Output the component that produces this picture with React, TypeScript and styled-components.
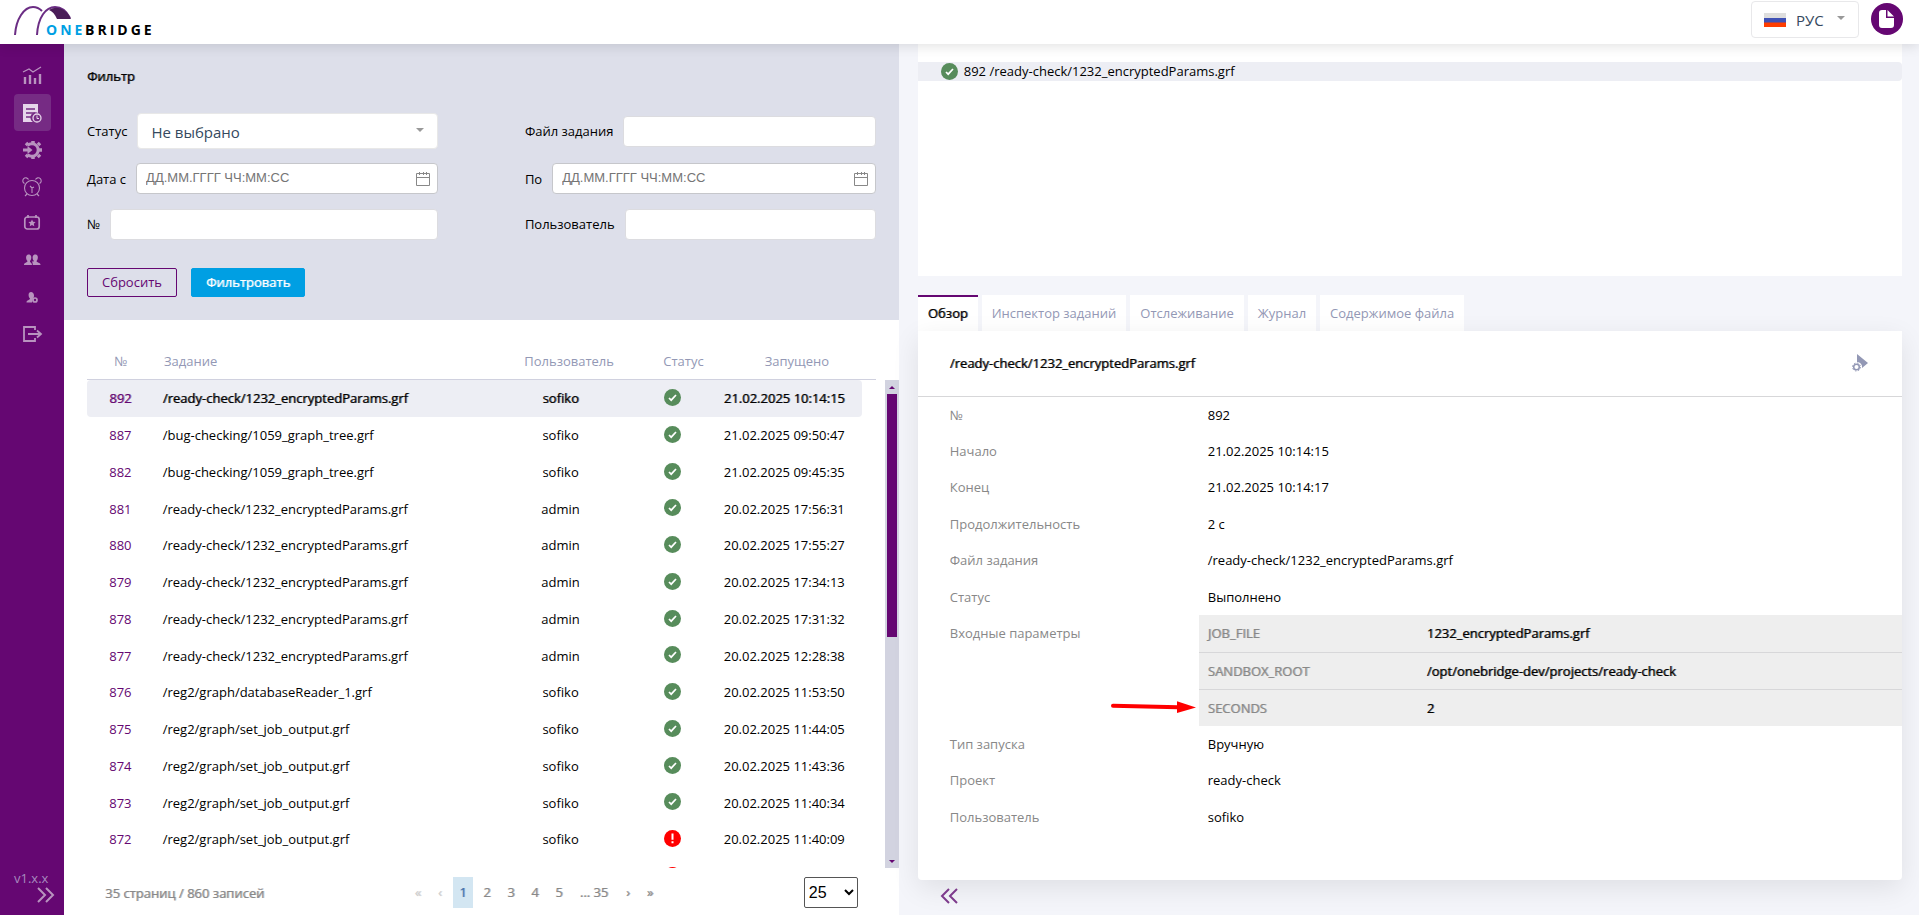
import React from 'react';
import styled, { createGlobalStyle, css } from 'styled-components';

const Global = createGlobalStyle`
  * { box-sizing: border-box; }
  html, body, #root { height: 100%; }
  body { margin: 0; font: 13px/20px "Open Sans", "Noto Sans", sans-serif; color: #000; background: #fff; }
  button, input, select { font: inherit; margin: 0; }
  button { cursor: pointer; }
`;

const strong = css`text-shadow: 1px 0 0 color-mix(in srgb, currentColor 60%, transparent);`;

const Page = styled.div`display: flex; flex-direction: column; height: 100vh; overflow: hidden;`;
const Header = styled.header`
  position: relative; z-index: 2; flex: none; height: 44px; padding: 0 16px 0 14px;
  display: flex; align-items: flex-start; justify-content: space-between;
  background: #fff; box-shadow: 0 2px 12px rgba(0, 0, 0, 0.12);
`;
const LogoArt = styled.svg`display: block; margin-top: 4px; width: 150px; height: 34px; overflow: visible;`;
const HeaderTools = styled.div`display: flex; gap: 12px; padding-top: 1px;`;
const Language = styled.button`
  width: 108px; height: 37px; padding: 0 13px 0 12px; display: flex; align-items: center;
  border: 1px solid #e8e8ea; border-radius: 4px; background: #fff; color: #35495e; font-size: 15px;
`;
const Flag = styled.svg`width: 22px; height: 14px; margin-right: 10px;`;
const Caret = styled.span`
  margin: 0 0 4px auto; border: 4px solid transparent; border-top-color: #999; border-bottom: 0;
`;
const DocButton = styled.button`
  width: 32px; height: 32px; margin-top: 2px; padding: 0; border: 0; border-radius: 50%; background: #650772;
  display: grid; place-items: center;
`;

const Body = styled.div`flex: 1; min-height: 0; display: flex;`;
const Sidebar = styled.nav`
  flex: none; width: 64px; padding: 14px 0 12px; background: #650772;
  display: flex; flex-direction: column; align-items: center;
`;
const NavLink = styled.a<{ $active?: boolean }>`
  flex: none; width: 37px; height: 37px; display: grid; place-items: center; border-radius: 4px; color: #b893bf;
  &:nth-child(4n + 1) { height: 36px; }
  ${p => p.$active && 'background: #762b84; color: #e6d5ea;'}
  svg { display: block; width: 20px; height: 20px; overflow: visible; }
`;
const Version = styled.div`margin-top: auto; width: 100%; padding-left: 14px; color: #a78abf; line-height: 17px;`;
const Expand = styled.button`
  align-self: flex-end; margin-right: 9px; padding: 0; border: 0; background: none; color: #b893bf; line-height: 0;
`;
const Panels = styled.div`flex: 1; min-width: 0; display: flex;`;

const Left = styled.main`flex: 0 0 45%; min-width: 0; display: flex; flex-direction: column; background: #fff;`;
const Filter = styled.form`flex: none; height: 276px; padding: 22px 23px 0; background: #dddfea;`;
const FilterTitle = styled.h2`margin: 0 0 25px; font-size: 13px; line-height: 20px; font-weight: 400; ${strong}`;
const Fields = styled.div`display: grid; grid-template-columns: 1fr 1fr; column-gap: 87px;`;
const Field = styled.div<{ $h: number }>`height: ${p => p.$h}px; display: flex; align-items: center; gap: 10px;`;
const Input = styled.input`
  flex: 1; min-width: 0; height: 31px; border: 1px solid #dcdce0; border-radius: 4px; background: #fff;
`;
const SelectWrap = styled.div`flex: 1; display: flex; align-items: center; position: relative;`;
const StatusSelect = styled.select`
  width: 100%; height: 36px; padding: 2px 13px 0; border: 1px solid #e8e8e8; border-radius: 4px;
  background: #fff; appearance: none; color: #35495e; font-size: 15px;
`;
const SelectCaret = styled(Caret)`position: absolute; right: 14px; top: 15px; margin: 0; pointer-events: none;`;
const DateBox = styled.div`
  flex: 1; height: 31px; display: flex; align-items: center; padding: 0 7px 0 9px;
  border: 1px solid #c6c7cb; border-radius: 4px; background: #fff; color: #888;
  input {
    flex: 1; min-width: 0; padding: 0 0 1px; border: 0; outline: 0; background: none;
    font: 13px/20px "Liberation Sans", sans-serif;
  }
  input::placeholder { color: #757575; }
`;
const Actions = styled.div`display: flex; gap: 14px; margin-top: 26px;`;
const Button = styled.button<{ $primary?: boolean }>`
  height: 29px; padding: 0 14px 2px; border-radius: 2px; border: 1px solid #650772; background: transparent; color: #650772;
  ${p => p.$primary && css`background: #009fe3; border-color: #009fe3; color: #fff; ${strong}`}
`;

const ListArea = styled.section`flex: 1; min-height: 0; padding: 22px 0 0 23px; display: flex; flex-direction: column;`;
const Scroll = styled.div`flex: 1; min-height: 0; display: flex; overflow: hidden;`;
const TableClip = styled.div`flex: 1; min-width: 0; overflow: hidden;`;
const Table = styled.table`
  width: 100%; table-layout: fixed; border-collapse: separate; border-spacing: 0;
  th { height: 37px; padding: 1px 0 0; color: #9398b5; font-weight: 400; line-height: 20px; vertical-align: middle; }
  th:nth-child(2), td:nth-child(2) { text-align: left; padding-left: 6px; }
  th:nth-child(3), td:nth-child(3), th:nth-child(4), td:nth-child(4) { padding-left: 2px; }
  th:first-child, td:first-child { padding-right: 3px; }
`;
const HeadWrap = styled.div`flex: none; margin-right: 23px; border-bottom: 1px solid #d0d1df;`;
const Row = styled.tr<{ $selected?: boolean }>`
  td { height: 37px; padding: 0 0 1px; text-align: center; line-height: 20px; vertical-align: middle; white-space: nowrap; }
  &:nth-child(4n) td { height: 36px; }
  td:first-child { color: #650772; border-radius: 4px 0 0 4px; }
  td:last-child { border-radius: 0 4px 4px 0; }
  ${p => p.$selected && css`td { background: #edeef4; ${strong} }`}
`;
const StatusSvg = styled.svg`display: block; margin: 0 auto 2px; width: 17px; height: 17px; flex: none;`;
const Scrollbar = styled.div`
  flex: none; width: 14px; margin-left: 23px; background: #d2d3e0;
  display: flex; flex-direction: column; align-items: center; padding: 6px 0 5px;
`;
const Tip = styled.span<{ $down?: boolean }>`
  flex: none; border: 3px solid transparent;
  ${p => (p.$down ? 'border-top-color: #650772; border-bottom: 0; margin-top: auto;' : 'border-bottom-color: #650772; border-top: 0;')}
`;
const Thumb = styled.span`flex: none; width: 10px; height: 51%; margin-top: 5px; background: #650772;`;

const Footer = styled.footer`
  flex: none; height: 47px; padding: 2px 41px 0 18px; display: flex; justify-content: space-between;
  align-items: center; color: #888;
`;
const Summary = styled.span`${strong}`;
const Pager = styled.div`display: flex; align-items: center;`;
const PageButton = styled.button<{ $w?: number; $current?: boolean; $off?: boolean }>`
  width: ${p => p.$w || 24}px; height: 31px; padding: 0 0 1px; border: 0; background: none; color: ${p => (p.$off ? '#ccc' : '#888')};
  ${strong}
  ${p => p.$current && 'width: 20px; margin: 0 2px; background: #d3e6f2; color: #3f6ea8;'}
`;
const PageSize = styled.select`
  width: 54px; height: 31px; padding: 0; border: 1px solid #555; border-radius: 2px;
  background: #fff; color: #000; font: 16px/20px "Liberation Sans", sans-serif;
`;

const Right = styled.aside`
  flex: 1; min-width: 0; padding: 0 17px 0 19px; background: #f4f5fa;
  display: flex; flex-direction: column;
`;
const Tree = styled.section`flex: none; height: 232px; padding-top: 18px; background: #fff;`;
const TreeItem = styled.div`
  height: 19px; padding: 0 0 1px 23px; display: flex; align-items: center; background: #edeef4; border-radius: 0 4px 4px 0;
  ${StatusSvg} { margin: 0 6px 0 0; }
`;
const Tabs = styled.div`display: flex; gap: 4px; margin-top: 19px; height: 36px;`;
const Tab = styled.button<{ $active?: boolean }>`
  padding: 0 10px 3px; border: 0; border-top: 2px solid ${p => (p.$active ? '#650772' : '#fff')}; white-space: nowrap;
  background: #fff; color: ${p => (p.$active ? '#000' : '#9398b5')};
  ${p => p.$active && strong}
`;
const Card = styled.section`
  flex: 1; min-height: 0; background: #fff; border-radius: 0 0 4px 4px; box-shadow: 0 8px 28px rgba(0, 0, 0, 0.09);
`;
const CardHead = styled.div`
  height: 66px; padding: 0 34px 1px 32px; display: flex; align-items: center; justify-content: space-between;
  border-bottom: 1px solid #d7d7d9;
  h2 { margin: 0; font-size: 13px; line-height: 20px; font-weight: 400; ${strong} }
`;
const IconButton = styled.button`padding: 0; border: 0; background: none; color: #9398b5; line-height: 0;`;
const Details = styled.dl`margin: 0;`;
const Detail = styled.div`
  display: flex; min-height: 36px; padding-left: 32px;
  &:nth-child(2n + 3) { min-height: 37px; }
  dt { flex: none; width: 249px; padding-top: 8px; color: #888; }
  dd { flex: 1; margin: 0; padding: 8px 0 0 9px; }
`;
const ParamsCell = styled.dd`&&& { position: relative; padding: 0; }`;
const Params = styled.table`
  width: 100%; border-collapse: collapse; background: #eee; ${strong}
  th, td { height: 37px; padding: 0 9px; text-align: left; font-weight: 400; ${strong} }
  th { width: 219px; color: #888; }
  tr + tr { border-top: 1px solid #d7d7d9; }
`;
const Arrow = styled.svg`position: absolute; right: 100%; top: 84px; width: 90px; height: 16px;`;
const Collapse = styled.button`
  flex: none; align-self: flex-start; height: 35px; margin-left: 22px; padding: 0 0 4px; border: 0; background: none; color: #7d3a8c; line-height: 0;
`;

function Chevrons({ left }: { left?: boolean }) {
  return (
    <svg width="19" height="16" viewBox="0 0 19 16" fill="none" stroke="currentColor" strokeWidth="2">
      {left
        ? <path d="M9 1 2 8l7 7M17 1l-7 7 7 7" />
        : <path d="m2 1 7 7-7 7M10 1l7 7-7 7" />}
    </svg>
  );
}

function Status({ ok }: { ok: boolean }) {
  return (
    <StatusSvg viewBox="0 0 17 17" role="img" aria-label={ok ? 'Выполнено' : 'Ошибка'}>
      <circle cx="8.5" cy="8.5" r="8.5" fill={ok ? '#578c5b' : '#ff0000'} />
      {ok
        ? <path d="m5 9 2.2 2.2L12 6" fill="none" stroke="#fff" strokeWidth="1.7" />
        : <path d="M8.5 3.5v6.3M8.5 11.3v2" fill="none" stroke="#fff" strokeWidth="2" />}
    </StatusSvg>
  );
}

function Calendar() {
  return (
    <svg width="14" height="14" viewBox="0 0 14 14" fill="none" stroke="#888">
      <path d="M.5 1.5h13v12H.5zM.5 5.5h13M3.5 0v3M10.5 0v3M7.5 0v3" />
    </svg>
  );
}

function Logo() {
  return (
    <LogoArt viewBox="0 0 150 34" role="img" aria-label="ONEBRIDGE">
      <g fill="none" stroke="#6b2d84" strokeWidth="2">
        <path d="M1 31C2 15 10 3 19 3c4 0 7 2 9 4" />
        <path d="M23 31C24 13 32 3 41 3c7 0 12 5 15 11" />
      </g>
      <path d="M35 6c8-5 18-1 22 9H43c-2-5-5-8-8-9z" fill="#4a1d58" />
      <text y="31" fontFamily='"Open Sans", sans-serif' fontWeight="700" fontSize="14" letterSpacing="3">
        <tspan x="32" fill="#009fe3">ONE</tspan>
        <tspan x="71" fill="#000">BRIDGE</tspan>
      </text>
    </LogoArt>
  );
}

const navIcons: { name: string; art: React.ReactNode }[] = [
  { name: 'Мониторинг', art: <g fill="none" stroke="currentColor"><path d="M1 6l6-3 4 3 8-5" strokeWidth="1.3" /><path d="M3 18v-7M8 18V9M13 18v-6M18 18V8" strokeWidth="2.4" /></g> },
  { name: 'История', art: <g><path d="M1 1h15v9a5 5 0 0 0-5 9H1z" fill="currentColor" /><path d="M4 6h9M4 10h9M4 14h6" stroke="#762b84" strokeWidth="1.3" /><circle cx="15" cy="15" r="4" fill="#762b84" stroke="currentColor" strokeWidth="1.3" /><path d="M15 12.500v3h2" fill="none" stroke="currentColor" /></g> },
  { name: 'Запуск', art: <g fill="none" stroke="currentColor"><path d="M5.500 5.500a6.300 6.300 0 1 1 0 9" strokeWidth="3" /><path d="M11 1v3M11 16v3M4 3l2 2M18 3l-2 2M4 17l2-2M18 17l-2-2M17 10h3" strokeWidth="3.500" /><path d="M1 10h5" strokeWidth="3" /><path d="M5.500 6l5 4-5 4z" fill="currentColor" stroke="none" /></g> },
  { name: 'Расписание', art: <g fill="none" stroke="currentColor" strokeWidth="1.1"><circle cx="10" cy="11" r="7.500" /><path d="M2.500 6.500a3 3 0 1 1 4-4M17.500 6.500a3 3 0 1 0-4-4M5 17l-2 2M15 17l2 2M8 9l2 2 2-1M10 11v5" /></g> },
  { name: 'События', art: <g><rect x="2.800" y="4" width="14.400" height="12" rx="2.500" fill="none" stroke="currentColor" strokeWidth="1.700" /><path d="M6 2v3M14 2v3" stroke="currentColor" strokeWidth="1.700" /><path d="m10 6.500 1.100 2.300 2.500.3-1.800 1.700.5 2.500-2.300-1.200-2.300 1.200.5-2.500-1.800-1.700 2.500-.3z" fill="currentColor" /></g> },
  { name: 'Пользователи', art: <g fill="currentColor"><path d="M2 15c0-3 3.500-2 3.500-4-2-2-2-6.500 1.200-6.500S10 9 8 11c0 2 2 1.500 2 4z" /><path d="M10.800 15c0-2-.3-2.800-1-3.200 1-.3 2.200-.3 2.200-.8-2-2-2-6.500 1.300-6.500s3.200 4.500 1.200 6.500c0 2 4 1 4 4z" /></g> },
  { name: 'Права', art: <g fill="currentColor"><path d="M4.500 15.500c0-3 3.500-2 3.500-4-2-2-2-6.500 1-6.500s4 4.500 2 6.500l-1 4z" /><circle cx="13" cy="13" r="2" fill="#650772" stroke="currentColor" strokeWidth="1.700" /></g> },
  { name: 'Выход', art: <g fill="none" stroke="currentColor" strokeWidth="1.800"><path d="M13 6V3H2v14h11v-3M6 10h12M15 6.500l4 3.500-4 3.500" /></g> },
];

type Job = { id?: number; file?: string; user?: string; ok: boolean; time?: string };

const jobs: Job[] = [
  { id: 892, file: '/ready-check/1232_encryptedParams.grf', user: 'sofiko', ok: true, time: '21.02.2025 10:14:15' },
  { id: 887, file: '/bug-checking/1059_graph_tree.grf', user: 'sofiko', ok: true, time: '21.02.2025 09:50:47' },
  { id: 882, file: '/bug-checking/1059_graph_tree.grf', user: 'sofiko', ok: true, time: '21.02.2025 09:45:35' },
  { id: 881, file: '/ready-check/1232_encryptedParams.grf', user: 'admin', ok: true, time: '20.02.2025 17:56:31' },
  { id: 880, file: '/ready-check/1232_encryptedParams.grf', user: 'admin', ok: true, time: '20.02.2025 17:55:27' },
  { id: 879, file: '/ready-check/1232_encryptedParams.grf', user: 'admin', ok: true, time: '20.02.2025 17:34:13' },
  { id: 878, file: '/ready-check/1232_encryptedParams.grf', user: 'admin', ok: true, time: '20.02.2025 17:31:32' },
  { id: 877, file: '/ready-check/1232_encryptedParams.grf', user: 'admin', ok: true, time: '20.02.2025 12:28:38' },
  { id: 876, file: '/reg2/graph/databaseReader_1.grf', user: 'sofiko', ok: true, time: '20.02.2025 11:53:50' },
  { id: 875, file: '/reg2/graph/set_job_output.grf', user: 'sofiko', ok: true, time: '20.02.2025 11:44:05' },
  { id: 874, file: '/reg2/graph/set_job_output.grf', user: 'sofiko', ok: true, time: '20.02.2025 11:43:36' },
  { id: 873, file: '/reg2/graph/set_job_output.grf', user: 'sofiko', ok: true, time: '20.02.2025 11:40:34' },
  { id: 872, file: '/reg2/graph/set_job_output.grf', user: 'sofiko', ok: false, time: '20.02.2025 11:40:09' },
  { ok: false },
];

const Col = styled.col<{ $share: number }>`width: ${p => p.$share}%;`;
const Columns = () => (
  <colgroup>{[9, 42, 20, 9, 20].map((share, i) => <Col key={i} $share={share} />)}</colgroup>
);

const before = [['№', '892'], ['Начало', '21.02.2025 10:14:15'], ['Конец', '21.02.2025 10:14:17'], ['Продолжительность', '2 с'],
  ['Файл задания', '/ready-check/1232_encryptedParams.grf'], ['Статус', 'Выполнено']];
const params = [['JOB_FILE', '1232_encryptedParams.grf'], ['SANDBOX_ROOT', '/opt/onebridge-dev/projects/ready-check'], ['SECONDS', '2']];
const after = [['Тип запуска', 'Вручную'], ['Проект', 'ready-check'], ['Пользователь', 'sofiko']];

export default function App() {
  return (
    <Page>
      <Global />
      <Header>
        <Logo />
        <HeaderTools>
          <Language type="button">
            <Flag viewBox="0 0 22 14">
              <path fill="#dedede" d="M0 0h22v5H0z" /><path fill="#3f51b5" d="M0 5h22v5H0z" /><path fill="#ff3d00" d="M0 9.500h22V14H0z" />
            </Flag>
            РУС<Caret />
          </Language>
          <DocButton type="button" aria-label="Документация">
            <svg width="16" height="18" viewBox="0 0 16 18">
              <path fill="#fff" d="M3 0h4v8h8v7a3 3 0 0 1-3 3H3a3 3 0 0 1-3-3V3a3 3 0 0 1 3-3zM8.500 0 15 6.500H8.500z" />
            </svg>
          </DocButton>
        </HeaderTools>
      </Header>
      <Body>
        <Sidebar>
          {navIcons.map((icon, i) => (
            <NavLink key={icon.name} href="#" aria-label={icon.name} $active={i === 1}>
              <svg viewBox="0 0 20 20">{icon.art}</svg>
            </NavLink>
          ))}
          <Version>v1.x.x</Version>
          <Expand type="button" aria-label="Развернуть"><Chevrons /></Expand>
        </Sidebar>
        <Panels>
          <Left>
            <Filter>
              <FilterTitle>Фильтр</FilterTitle>
              <Fields>
                <Field $h={40}>
                  <label htmlFor="status">Статус</label>
                  <SelectWrap>
                    <StatusSelect id="status"><option>Не выбрано</option></StatusSelect>
                    <SelectCaret />
                  </SelectWrap>
                </Field>
                <Field $h={40}><label htmlFor="file">Файл задания</label><Input id="file" /></Field>
                <Field $h={55}>
                  <label htmlFor="from">Дата с</label>
                  <DateBox><input id="from" placeholder="ДД.ММ.ГГГГ ЧЧ:ММ:СС" /><Calendar /></DateBox>
                </Field>
                <Field $h={55}>
                  <label htmlFor="to">По</label>
                  <DateBox><input id="to" placeholder="ДД.ММ.ГГГГ ЧЧ:ММ:СС" /><Calendar /></DateBox>
                </Field>
                <Field $h={36}><label htmlFor="num">№</label><Input id="num" /></Field>
                <Field $h={36}><label htmlFor="user">Пользователь</label><Input id="user" /></Field>
              </Fields>
              <Actions>
                <Button type="button">Сбросить</Button>
                <Button type="button" $primary>Фильтровать</Button>
              </Actions>
            </Filter>
            <ListArea>
              <HeadWrap>
                <Table>
                  <Columns />
                  <thead><tr><th>№</th><th>Задание</th><th>Пользователь</th><th>Статус</th><th>Запущено</th></tr></thead>
                </Table>
              </HeadWrap>
              <Scroll>
                <TableClip>
                  <Table>
                    <Columns />
                    <tbody>
                      {jobs.map((job, i) => (
                        <Row key={i} $selected={i === 0}>
                          <td>{job.id}</td><td>{job.file}</td><td>{job.user}</td><td><Status ok={job.ok} /></td><td>{job.time}</td>
                        </Row>
                      ))}
                    </tbody>
                  </Table>
                </TableClip>
                <Scrollbar><Tip /><Thumb /><Tip $down /></Scrollbar>
              </Scroll>
              <Footer>
                <Summary>35 страниц / 860 записей</Summary>
                <Pager>
                  <PageButton type="button" $w={22} $off>«</PageButton>
                  <PageButton type="button" $w={22} $off>‹</PageButton>
                  <PageButton type="button" $current>1</PageButton>
                  {['2', '3', '4', '5'].map(n => <PageButton type="button" key={n}>{n}</PageButton>)}
                  <PageButton type="button" $w={46}>... 35</PageButton>
                  <PageButton type="button" $w={22}>›</PageButton>
                  <PageButton type="button" $w={22}>»</PageButton>
                </Pager>
                <PageSize aria-label="Записей на странице"><option>25</option></PageSize>
              </Footer>
            </ListArea>
          </Left>
          <Right>
            <Tree>
              <TreeItem><Status ok />892 /ready-check/1232_encryptedParams.grf</TreeItem>
            </Tree>
            <Tabs role="tablist">
              {['Обзор', 'Инспектор заданий', 'Отслеживание', 'Журнал', 'Содержимое файла'].map((t, i) => (
                <Tab type="button" role="tab" key={t} $active={i === 0}>{t}</Tab>
              ))}
            </Tabs>
            <Card>
              <CardHead>
                <h2>/ready-check/1232_encryptedParams.grf</h2>
                <IconButton type="button" aria-label="Запустить с параметрами">
                  <svg width="16" height="18" viewBox="0 0 16 18">
                    <path fill="currentColor" d="M5 0l11 9-6 5a5 5 0 0 0-5-6z" />
                    <circle cx="4.500" cy="13" r="2.800" fill="none" stroke="currentColor" strokeWidth="1.500" />
                    <circle cx="4.500" cy="13" r="4" fill="none" stroke="currentColor" strokeWidth="1" strokeDasharray="1.500 1.640" />
                  </svg>
                </IconButton>
              </CardHead>
              <Details>
                {before.map(([k, v]) => <Detail key={k}><dt>{k}</dt><dd>{v}</dd></Detail>)}
                <Detail>
                  <dt>Входные параметры</dt>
                  <ParamsCell>
                    <Arrow viewBox="0 0 90 16">
                      <path d="M4 6.700 69 8.200" stroke="red" strokeWidth="4" strokeLinecap="round" />
                      <path d="M68 2.300v11.700l19-5.500z" fill="red" />
                    </Arrow>
                    <Params><tbody>{params.map(([k, v]) => <tr key={k}><th scope="row">{k}</th><td>{v}</td></tr>)}</tbody></Params>
                  </ParamsCell>
                </Detail>
                {after.map(([k, v]) => <Detail key={k}><dt>{k}</dt><dd>{v}</dd></Detail>)}
              </Details>
            </Card>
            <Collapse type="button" aria-label="Свернуть"><Chevrons left /></Collapse>
          </Right>
        </Panels>
      </Body>
    </Page>
  );
}
